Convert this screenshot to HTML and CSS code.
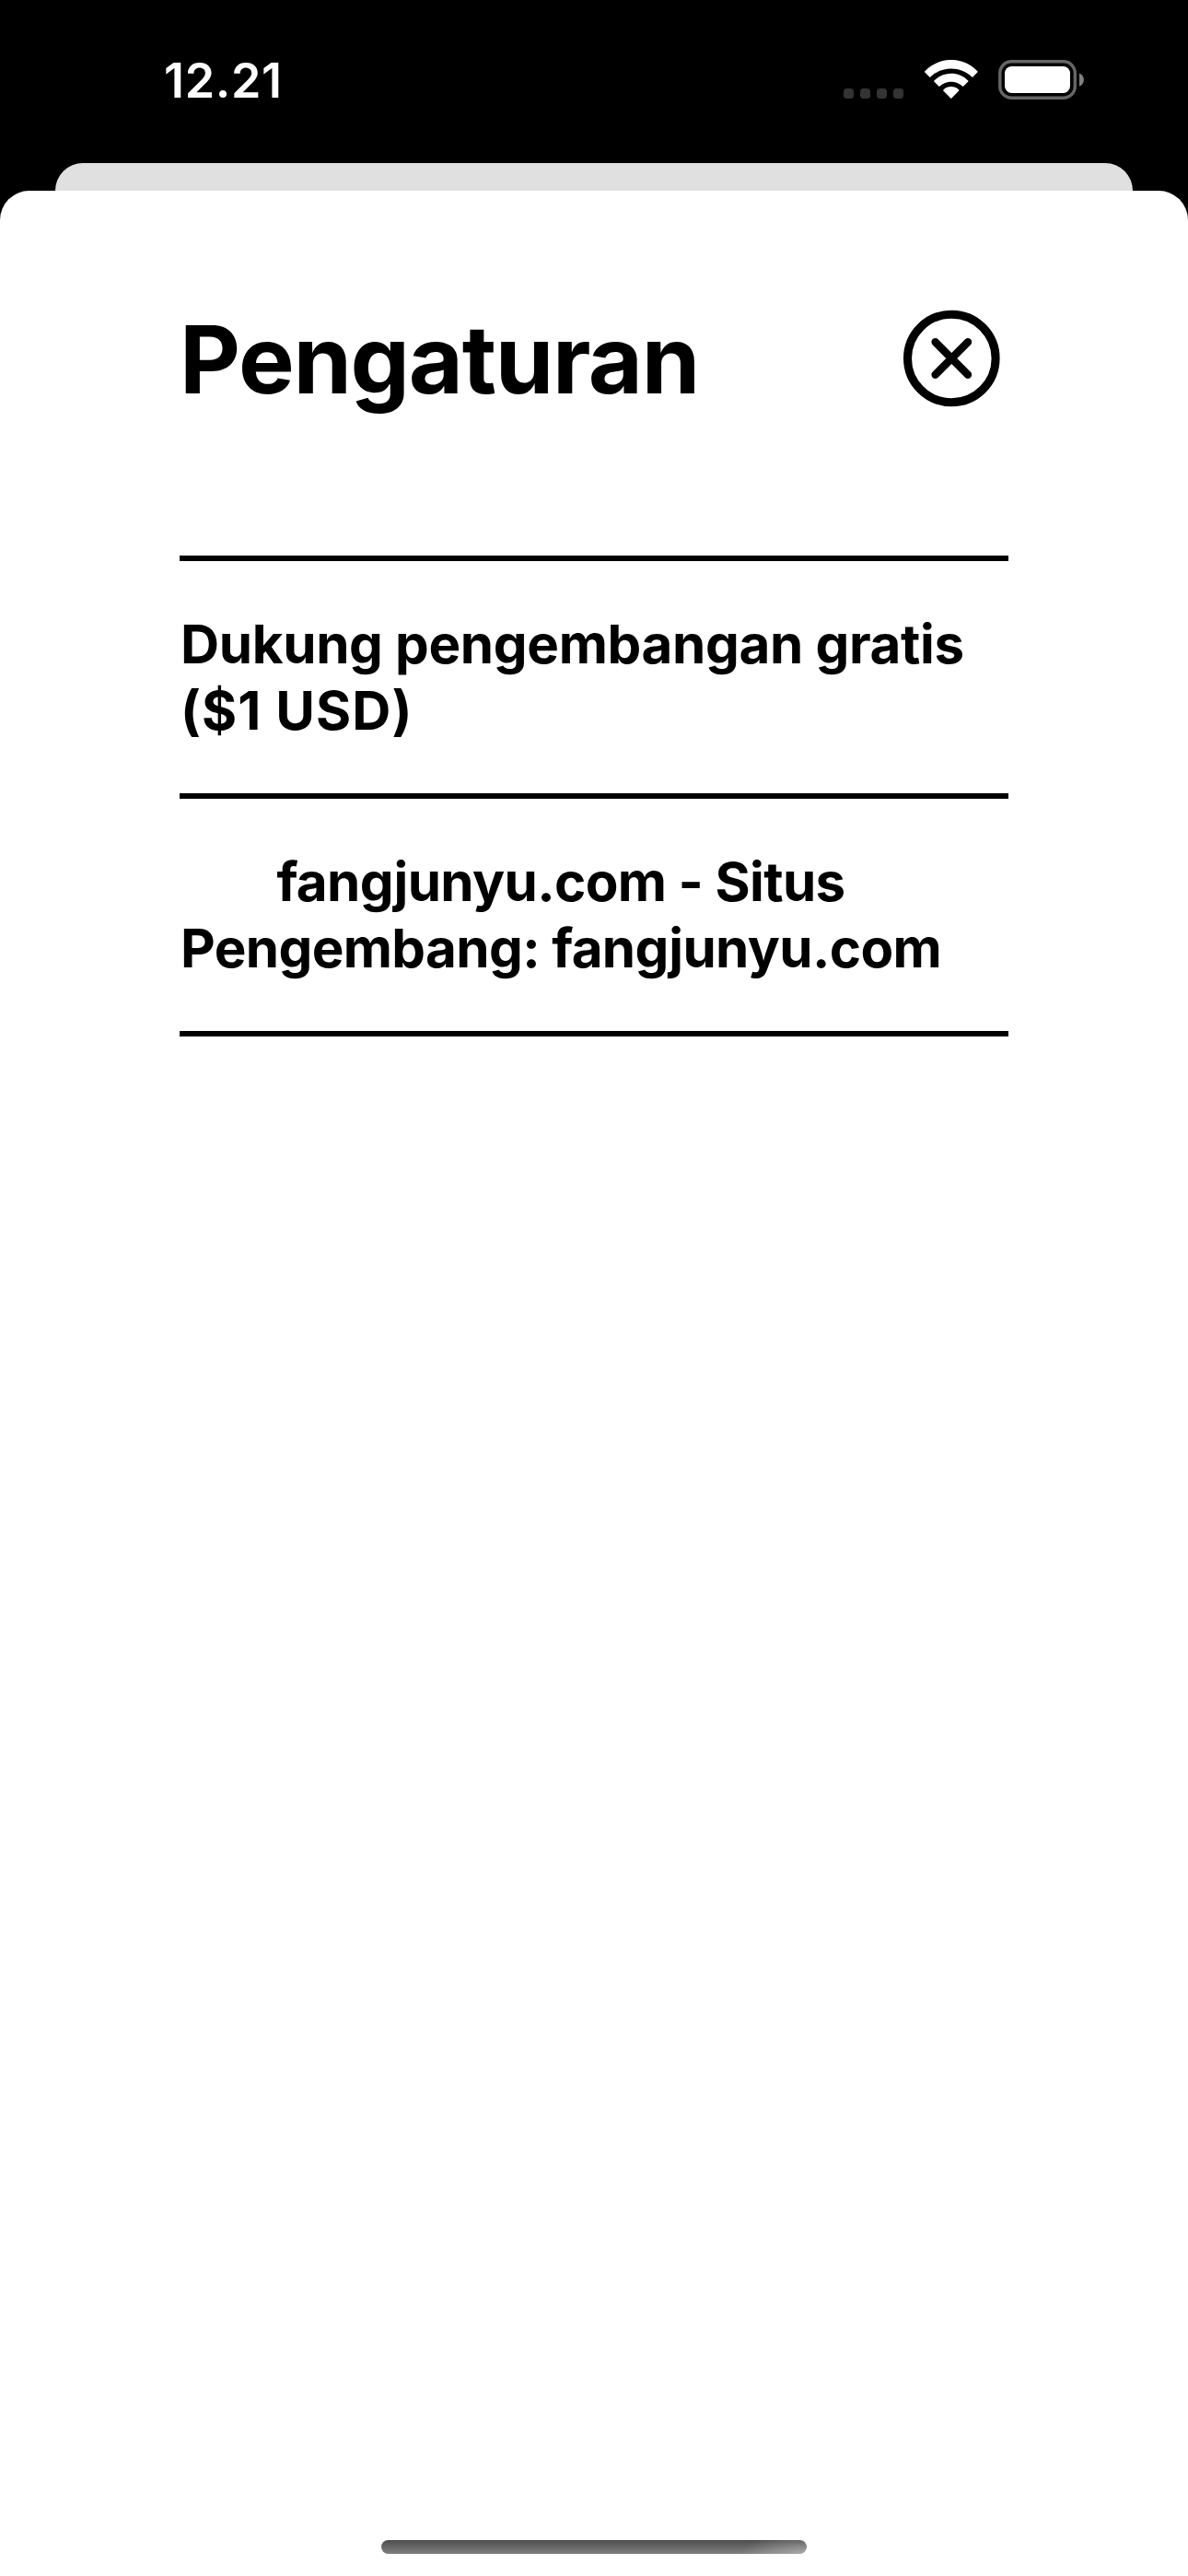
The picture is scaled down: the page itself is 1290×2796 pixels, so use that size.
FILE: index.html
```html
<!DOCTYPE html>
<html lang="id">
<head>
<meta charset="utf-8">
<title>Pengaturan</title>
<link rel="stylesheet" href="styles.css">
</head>
<body>
<div class="screen">
  <header class="status-bar">
    <time class="clock">12.21</time>
    <div class="indicators">
      <div class="cellular"><i></i><i></i><i></i><i></i></div>
      <svg class="wifi" width="58" height="43" viewBox="0 0 58 43" fill="#fff" aria-hidden="true">
        <path d="M0.3 13.5Q-0.3 12.9 0.4 12.2C16 -4.1 42 -4.1 57.3 12.2Q57.9 12.9 57.3 13.5L52.5 18.4Q51.9 18.9 51.3 18.4C38.8 6.6 19 6.6 6.4 18.4Q5.8 18.9 5.2 18.4Z"/>
        <path d="M10.3 23.5Q9.8 23 10.4 22.4C20.8 12.1 37 12.1 47.2 22.4Q47.8 23 47.3 23.5L42.3 28.5Q41.7 29 41.1 28.5C34.1 22.1 23.5 22.1 16.5 28.5Q15.9 29 15.3 28.5Z"/>
        <path d="M20.3 33.5Q19.8 33 20.4 32.4C25.3 28 32.4 28 37.2 32.4Q37.8 33 37.3 33.5L29.4 41.6Q28.8 42.2 28.2 41.6Z"/>
      </svg>
      <svg class="battery" width="94" height="43" viewBox="0 0 94 43" aria-hidden="true">
        <rect x="1.8" y="1.8" width="81.5" height="39.4" rx="12.5" fill="none" stroke="#666" stroke-width="3.4"/>
        <rect x="7" y="7" width="71" height="29" rx="7.5" fill="#fff"/>
        <path d="M88 14.5C94.6 17 94.6 26.2 88 28.7Z" fill="#808080"/>
      </svg>
    </div>
  </header>
  <div class="sheet-behind"></div>
  <main class="sheet">
    <div class="title-row">
      <h1 class="title">Pengaturan</h1>
      <button class="close" aria-label="Tutup">
        <svg width="106" height="106" viewBox="0 0 106 106" fill="none" stroke="#000">
          <circle cx="53.3" cy="53" r="47.8" stroke-width="9"/>
          <path d="M35.6 35.3L71 70.7M71 35.3L35.6 70.7" stroke-width="8.4" stroke-linecap="round"/>
        </svg>
      </button>
    </div>
    <ul class="options">
      <li class="option"><p class="label"><span class="support">Dukung pengembangan gratis</span><br><span class="price">($1 USD)</span></p></li>
      <li class="option"><p class="label centered">fangjunyu.com - Situs<br>Pengembang: fangjunyu.com</p></li>
    </ul>
    <div class="home-indicator"></div>
  </main>
</div>
</body>
</html>
```
FILE: styles.css
```css
* {
  box-sizing: border-box;
}

body {
  margin: 0;
  background: #000;
  color: #000;
  font-family: Inter, "Liberation Sans", sans-serif;
}

.screen {
  display: flex;
  flex-direction: column;
  width: 1290px;
  height: 2796px;
  overflow: hidden;
}

.status-bar {
  display: flex;
  justify-content: space-between;
  align-items: flex-start;
  height: 177px;
  padding: 57px 112px 0 178px;
  color: #fff;
}

.clock {
  font-size: 52px;
  font-weight: 600;
  line-height: 62px;
  letter-spacing: 0.66px;
}

.indicators {
  display: flex;
  align-items: flex-end;
  margin-top: 8px;
}

.cellular {
  display: flex;
  gap: 7px;
  margin: 0 23px 1px 0;
}

.cellular i {
  width: 11px;
  height: 11px;
  border-radius: 3.5px;
  background: #333;
}

.wifi {
  margin-right: 22px;
}

.sheet-behind {
  flex: none;
  height: 30px;
  margin: 0 60px;
  border-radius: 30px 30px 0 0;
  background: #e0e0e0;
}

.sheet {
  display: flex;
  flex: 1;
  flex-direction: column;
  padding: 120px 195px 24px;
  border-radius: 32px 32px 0 0;
  background: #fff;
}

.title-row {
  display: flex;
  justify-content: space-between;
  align-items: center;
  height: 126px;
  margin-bottom: 150px;
}

.title {
  margin: 0;
  font-size: 102px;
  font-weight: 700;
  line-height: 126px;
  letter-spacing: -1.3px;
}

.close {
  display: flex;
  margin: 0 9px 2px 0;
  padding: 0;
  border: 0;
  background: none;
}

.options {
  margin: 0;
  padding: 0;
  border-top: 6px solid #000;
  list-style: none;
}

.option {
  padding: 54px 0;
  border-bottom: 6px solid #000;
}

.label {
  margin: 0;
  padding-left: 1px;
  font-size: 58.3px;
  font-weight: 700;
  line-height: 72px;
  white-space: nowrap;
}

.support {
  letter-spacing: -0.34px;
}

.price {
  letter-spacing: 1.05px;
}

.centered {
  width: 827px;
  letter-spacing: -0.62px;
  text-align: center;
}

.home-indicator {
  width: 462px;
  height: 15px;
  margin: auto auto 0;
  border-radius: 8px;
  background:
    radial-gradient(ellipse 70px 24px at 100% 100%, rgba(255, 255, 255, 0.35), transparent),
    linear-gradient(#4d4d4d, #808080);
}
```
